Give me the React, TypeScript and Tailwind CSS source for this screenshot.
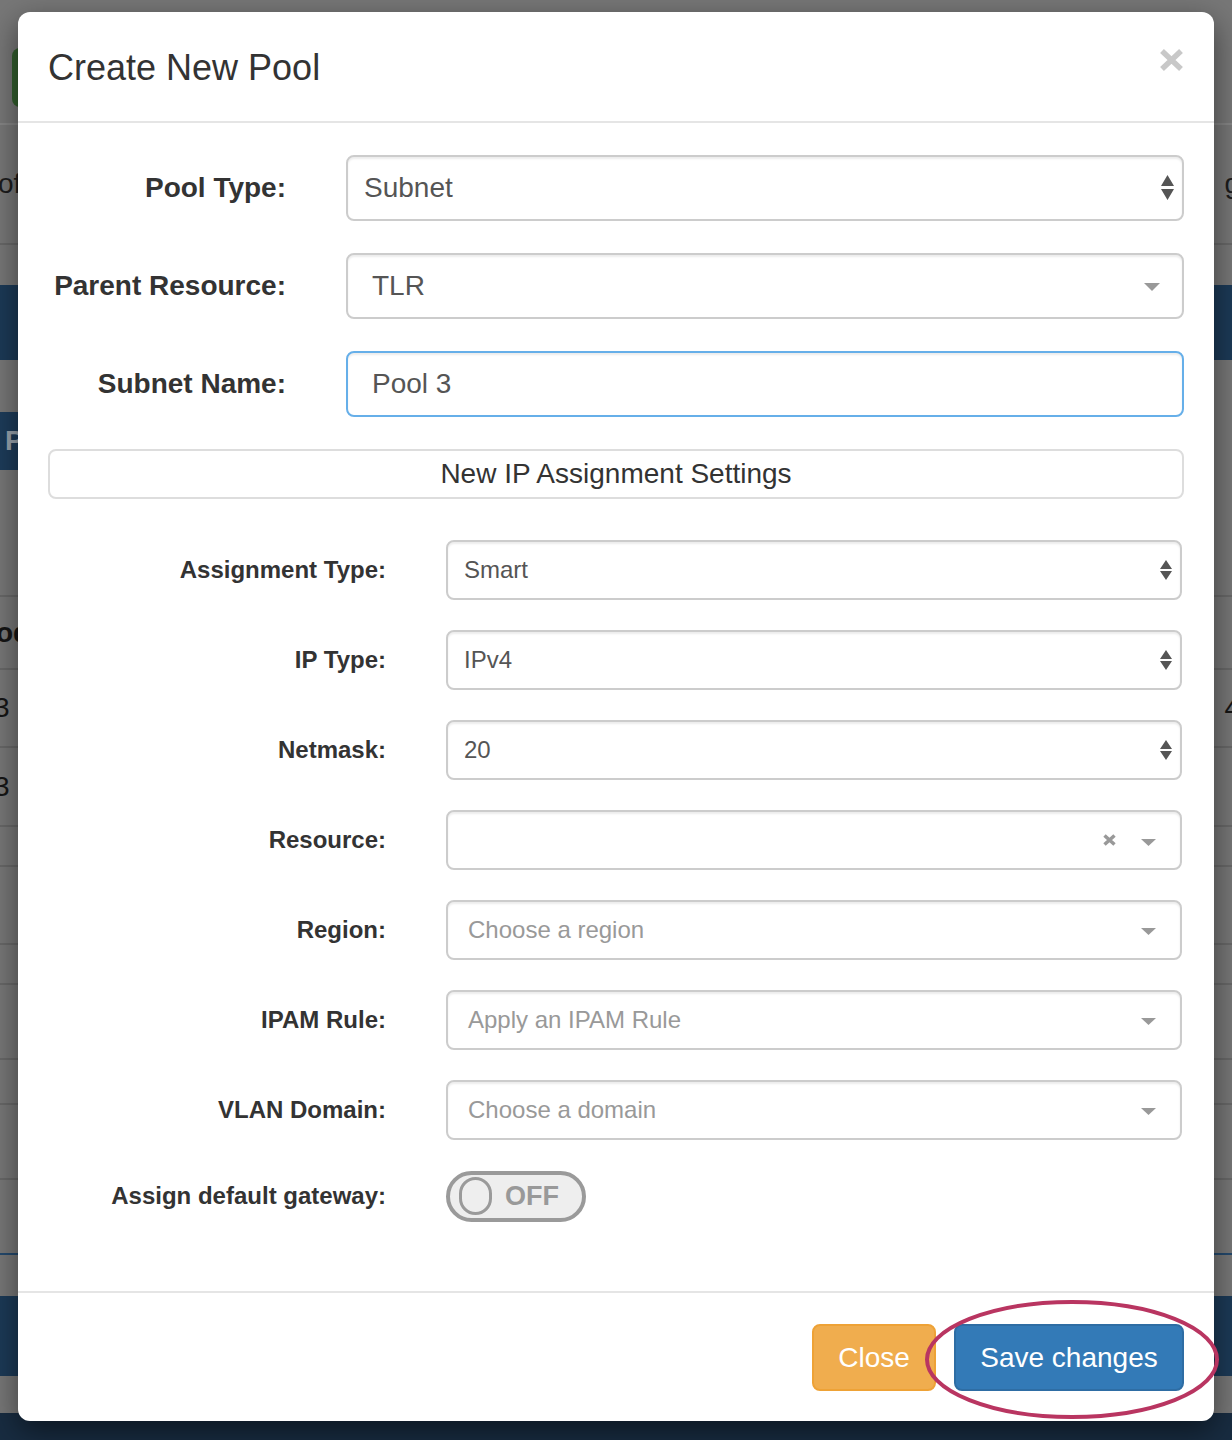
import React from "react";

/**
 * "Create New Pool" modal over a dimmed page. The page behind is only
 * visible as thin strips around the dialog, so it is sketched as rows.
 */

function UpDown({ large }: { large?: boolean }) {
  return large ? (
    <svg width="13" height="25" viewBox="0 0 13 25">
      <path d="M6.5 0L13 11H0z M0 14h13L6.5 25z" fill="#555" />
    </svg>
  ) : (
    <svg width="12" height="20" viewBox="0 0 12 20">
      <path d="M6 0L12 9H0z M0 11h12L6 20z" fill="#555" />
    </svg>
  );
}

function Caret({ w = 15, h = 7 }: { w?: number; h?: number }) {
  return (
    <svg width={w} height={h} viewBox={`0 0 ${w} ${h}`}>
      <path d={`M0 0h${w}L${w / 2} ${h}z`} fill="#999" />
    </svg>
  );
}

function Backdrop() {
  const line = "border-b-2 border-[#686868]";
  return (
    <div className="flex flex-col bg-[#777]">
      <div className={`h-[125px] pt-[48px] pl-[12px] border-b-2 border-[#858585]`}>
        <div className="h-[59px] w-[120px] rounded-[8px] bg-[#335f2e]" />
      </div>
      <div className={`h-[120px] flex items-center justify-between text-[28px] text-[#1c1c1c] ${line}`}>
        <span className="-ml-[2px]">of</span>
        <span className="mr-[-8px]">g</span>
      </div>
      <div className="h-[40px]" />
      <div className="h-[75px] bg-[#1c3a57]" />
      <div className="h-[52px]" />
      <div className="h-[58px] flex">
        <div className="w-[80px] bg-[#1d3c5a] pl-[5px] text-[28px] font-bold leading-[58px] text-[#9aa4ae]">
          P
        </div>
      </div>
      <div className={`h-[127px] ${line}`} />
      <div className={`h-[73px] flex items-center text-[28px] font-bold text-[#151515] ${line}`}>
        <span className="-ml-[4px]">od</span>
      </div>
      <div className={`h-[78px] flex items-center justify-between text-[28px] text-[#151515] ${line}`}>
        <span className="-ml-[6px]">3</span>
        <span className="mr-[-8px]">4</span>
      </div>
      <div className={`h-[79px] flex items-center text-[28px] text-[#151515] ${line}`}>
        <span className="-ml-[6px]">3</span>
      </div>
      <div className={`h-[40px] ${line}`} />
      <div className={`h-[78px] ${line}`} />
      <div className={`h-[40px] ${line}`} />
      <div className={`h-[75px] ${line}`} />
      <div className={`h-[45px] ${line}`} />
      <div className={`h-[75px] ${line}`} />
      <div className="h-[75px] border-b-2 border-[#24496d]" />
      <div className="h-[41px]" />
      <div className="h-[80px] bg-[#1c3a57]" />
      <div className="h-[37px]" />
      <div className="h-[42px] bg-[#182c41]" />
    </div>
  );
}

const boxBase =
  "relative flex items-center rounded-[8px] border-2 bg-white shadow-[inset_0_2px_2px_rgba(0,0,0,0.075)]";

function TopRow({ label, children }: { label: string; children: React.ReactNode }) {
  return (
    <div className="flex items-center gap-[60px]">
      <label className="w-[238px] text-right text-[28px] font-bold text-[#333]">{label}</label>
      {children}
    </div>
  );
}

function Row({ label, children }: { label: string; children: React.ReactNode }) {
  return (
    <div className="flex items-center gap-[60px]">
      <label className="w-[338px] text-right text-[24px] font-bold text-[#333]">{label}</label>
      {children}
    </div>
  );
}

function NativeSelect({ value }: { value: string }) {
  return (
    <div className={`${boxBase} h-[60px] w-[736px] border-[#ccc] pl-[16px] text-[24px] text-[#555]`}>
      {value}
      <span className="absolute right-[8px] top-[18px]">
        <UpDown />
      </span>
    </div>
  );
}

function Chooser({ placeholder, clear }: { placeholder?: string; clear?: boolean }) {
  return (
    <div className={`${boxBase} h-[60px] w-[736px] border-[#ccc] pl-[20px] text-[24px] text-[#999]`}>
      {placeholder}
      <span className="absolute right-[24px] top-[26px] flex items-center gap-[25px]">
        {clear && (
          <svg width="13" height="12" viewBox="0 0 13 12" className="-mt-[4px]">
            <path d="M1.5 1.5l10 9M11.5 1.5l-10 9" stroke="#999" strokeWidth="3.5" />
          </svg>
        )}
        <Caret />
      </span>
    </div>
  );
}

export default function App() {
  return (
    <div className="relative h-[1440px] w-[1232px] overflow-hidden font-['Liberation_Sans',Arial,sans-serif]">
      <Backdrop />

      <div className="absolute left-[18px] top-[12px] w-[1196px] rounded-[12px] bg-white shadow-[0_10px_30px_rgba(0,0,0,0.5)]">
        <div className="flex h-[111px] items-center justify-between border-b-2 border-[#e5e5e5] px-[30px]">
          <h4 className="mt-[2px] text-[36px] text-[#333]">Create New Pool</h4>
          <svg width="23" height="22" viewBox="0 0 23 22" className="-mt-[13px] mr-[1px]">
            <path d="M2 2l19 18M21 2L2 20" stroke="#c8c8c8" strokeWidth="5.5" />
          </svg>
        </div>

        <div className="flex flex-col px-[30px] pt-[32px] pb-[69px]">
          <TopRow label="Pool Type:">
            <div className={`${boxBase} h-[66px] w-[838px] border-[#ccc] pl-[16px] text-[28px] text-[#555]`}>
              Subnet
              <span className="absolute right-[8px] top-[18px]">
                <UpDown large />
              </span>
            </div>
          </TopRow>
          <div className="mt-[32px]">
            <TopRow label="Parent Resource:">
              <div className={`${boxBase} h-[66px] w-[838px] border-[#ccc] pl-[24px] text-[28px] text-[#555]`}>
                TLR
                <span className="absolute right-[22px] top-[28px]">
                  <Caret w={16} h={8} />
                </span>
              </div>
            </TopRow>
          </div>
          <div className="mt-[32px]">
            <TopRow label="Subnet Name:">
              <div
                className={`${boxBase} h-[66px] w-[838px] border-[#66afe9] pl-[24px] text-[28px] text-[#555] shadow-[inset_0_2px_2px_rgba(0,0,0,0.075),0_0_16px_rgba(102,175,233,0.6)]`}
              >
                Pool 3
              </div>
            </TopRow>
          </div>

          <div className="mt-[32px] flex h-[50px] items-center justify-center rounded-[8px] border-2 border-[#ddd] text-[28px] text-[#333]">
            New IP Assignment Settings
          </div>

          <div className="mt-[41px] flex flex-col gap-[30px]">
            <Row label="Assignment Type:">
              <NativeSelect value="Smart" />
            </Row>
            <Row label="IP Type:">
              <NativeSelect value="IPv4" />
            </Row>
            <Row label="Netmask:">
              <NativeSelect value="20" />
            </Row>
            <Row label="Resource:">
              <Chooser clear />
            </Row>
            <Row label="Region:">
              <Chooser placeholder="Choose a region" />
            </Row>
            <Row label="IPAM Rule:">
              <Chooser placeholder="Apply an IPAM Rule" />
            </Row>
            <Row label="VLAN Domain:">
              <Chooser placeholder="Choose a domain" />
            </Row>
            <div className="flex h-[52px] items-center gap-[60px]">
              <label className="w-[338px] text-right text-[24px] font-bold text-[#333]">
                Assign default gateway:
              </label>
              <div className="flex h-[51px] w-[140px] items-center gap-[13px] rounded-full border-[4px] border-[#9a9a9a] bg-[#eee] pl-[9px]">
                <span className="h-[38px] w-[33px] rounded-full border-[3px] border-[#9a9a9a] bg-[#eee]" />
                <span className="text-[27px] font-bold text-[#999]">OFF</span>
              </div>
            </div>
          </div>
        </div>

        <div className="flex justify-end gap-[18px] border-t-2 border-[#e5e5e5] px-[30px] pt-[31px] pb-[30px]">
          <button className="h-[67px] w-[124px] rounded-[8px] border-2 border-[#eea236] bg-[#f0ad4e] text-[28px] text-white">
            Close
          </button>
          <button className="h-[67px] w-[230px] rounded-[8px] border-2 border-[#2e6da4] bg-[#337ab7] text-[28px] text-white">
            Save changes
          </button>
        </div>
      </div>

      <svg
        width="300"
        height="124"
        viewBox="0 0 300 124"
        className="absolute left-[924px] top-[1298px]"
      >
        <ellipse cx="148" cy="61.5" rx="145" ry="57.5" fill="none" stroke="#b93561" strokeWidth="4" />
      </svg>
    </div>
  );
}
